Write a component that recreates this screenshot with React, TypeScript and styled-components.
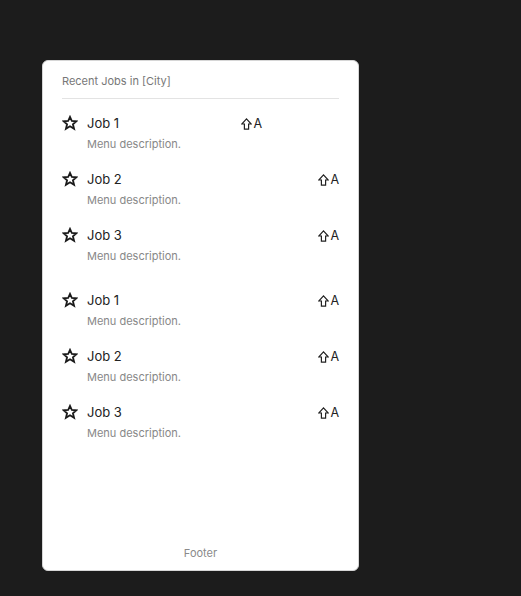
import React from "react";
import styled, { createGlobalStyle } from "styled-components";

const Global = createGlobalStyle`
  html, body { margin: 0; padding: 0; background: #1c1c1c; }
  body { font-family: Inter, "Noto Sans", sans-serif; -webkit-font-smoothing: antialiased; }
`;

const Page = styled.div`
  padding: 60px 0 0 42px;
`;

const Card = styled.div`
  box-sizing: border-box;
  width: 317px;
  height: 511px;
  background: #ffffff;
  border: 1px solid #d6d6d6;
  border-radius: 6px;
  display: flex;
  flex-direction: column;
  padding: 0 19px 0 19px;
`;

const Header = styled.div`
  font-size: 11px;
  line-height: 16px;
  color: #777777;
  padding: 12px 0 9px;
  border-bottom: 1px solid #e3e3e3;
`;

const List = styled.div`
  display: flex;
  flex-direction: column;
  padding-top: 14px;
  flex: 1;
`;

const Group = styled.div<{ $gapTop?: number }>`
  display: flex;
  flex-direction: column;
  margin-top: ${(p) => p.$gapTop ?? 0}px;
`;

const Item = styled.div`
  display: grid;
  grid-template-columns: 25px 1fr auto;
  grid-template-rows: 20px 16px;
  row-gap: 3px;
  padding-bottom: 17px;
`;

const IconCell = styled.div`
  display: flex;
  align-items: center;
`;

const Title = styled.div`
  font-size: 13px;
  line-height: 20px;
  color: #222222;
`;

const Shortcut = styled.div<{ $inset?: number }>`
  display: flex;
  align-items: center;
  gap: 1px;
  font-size: 12.5px;
  line-height: 20px;
  padding-top: 1px;
  color: #222222;
  margin-right: ${(p) => p.$inset ?? 0}px;
`;

const Desc = styled.div`
  grid-column: 2 / 4;
  font-size: 11px;
  line-height: 16px;
  color: #888888;
`;

const Footer = styled.div`
  text-align: center;
  font-size: 11px;
  line-height: 16px;
  color: #8a8a8a;
  padding-bottom: 9px;
`;

const Star = () => (
  <svg width="16" height="16" viewBox="0 0 24 24" fill="none" stroke="#1a1a1a" strokeWidth="2.7" strokeLinejoin="miter">
    <polygon points="12,2.8 14.8,9 21.6,9.4 16.4,13.9 18.1,20.7 12,16.9 5.9,20.7 7.6,13.9 2.4,9.4 9.2,9" />
  </svg>
);

const ShiftIcon = () => (
  <svg width="11" height="12" viewBox="0 0 11 12" fill="none" stroke="#222" strokeWidth="1.2" strokeLinejoin="miter">
    <path d="M5.5 0.9 L10.2 6 H7.6 V11.2 H3.4 V6 H0.8 Z" />
  </svg>
);

type Job = { title: string; inset?: number };

const groups: Job[][] = [
  [{ title: "Job 1", inset: 77 }, { title: "Job 2" }, { title: "Job 3" }],
  [{ title: "Job 1" }, { title: "Job 2" }, { title: "Job 3" }],
];

export default function App() {
  return (
    <>
      <Global />
      <Page>
        <Card>
          <Header>Recent Jobs in [City]</Header>
          <List>
            {groups.map((g, gi) => (
              <Group key={gi} $gapTop={gi === 0 ? 0 : 9}>
                {g.map((job, i) => (
                  <Item key={i}>
                    <IconCell>
                      <Star />
                    </IconCell>
                    <Title>{job.title}</Title>
                    <Shortcut $inset={job.inset}>
                      <ShiftIcon />
                      <span>A</span>
                    </Shortcut>
                    <Desc>Menu description.</Desc>
                  </Item>
                ))}
              </Group>
            ))}
          </List>
          <Footer>Footer</Footer>
        </Card>
      </Page>
    </>
  );
}
